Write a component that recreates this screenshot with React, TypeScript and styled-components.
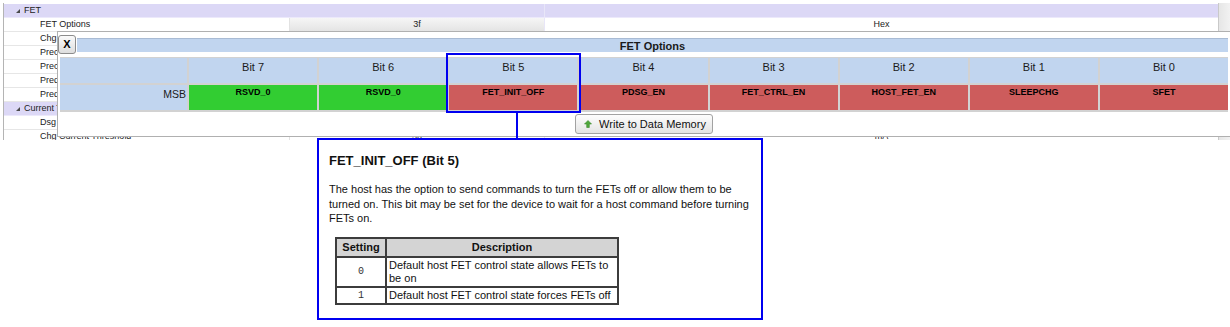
import React from "react"
import styled, { createGlobalStyle } from "styled-components"

const GlobalStyle = createGlobalStyle`
  html, body {
    margin: 0;
    padding: 0;
    background: #fff;
  }
  body {
    font-family: "Liberation Sans", Arial, sans-serif;
    color: #111;
  }
`

type TreeRowData = {
  label: string
  section?: boolean
  active?: boolean
  value?: string
  unit?: string
}

// rows 3..9 sit under the bit dialog; only the last one peeks out below it
const treeRows: TreeRowData[] = [
  { label: "FET", section: true },
  { label: "FET Options", value: "3f", unit: "Hex", active: true },
  { label: "Chg Current Threshold" },
  { label: "Precharge Start Voltage" },
  { label: "Precharge Recovery Voltage" },
  { label: "Predischarge Timeout" },
  { label: "Predischarge Stop Delta" },
  { label: "Current Thresholds", section: true },
  { label: "Dsg Current Threshold" },
  { label: "Chg Current Threshold", value: "50", unit: "mA" },
]

type BitData = { name: string; tone: "green" | "red" }

const bits: BitData[] = [
  { name: "RSVD_0", tone: "green" },
  { name: "RSVD_0", tone: "green" },
  { name: "FET_INIT_OFF", tone: "red" },
  { name: "PDSG_EN", tone: "red" },
  { name: "FET_CTRL_EN", tone: "red" },
  { name: "HOST_FET_EN", tone: "red" },
  { name: "SLEEPCHG", tone: "red" },
  { name: "SFET", tone: "red" },
]

const Expander = () => (
  <svg width="4" height="4" viewBox="0 0 4 4">
    <polygon points="4,0 4,4 0,4" fill="#4a4a4a" />
  </svg>
)

const UpArrow = () => (
  <svg width="8" height="8" viewBox="0 0 8 8">
    <polygon points="4,0.5 7.5,4 5.3,4 5.3,7.5 2.7,7.5 2.7,4 0.5,4" fill="#4fa83c" stroke="#3a8a2c" strokeWidth="0.6" />
  </svg>
)

const App: React.FC = () => {
  return (
    <Page>
      <GlobalStyle />
      <Tree>
        <TreeBody>
          {treeRows.map((row, i) => (
            <TreeRow key={i} $section={!!row.section}>
              <LabelCell $section={!!row.section}>
                {row.section && (
                  <ExpanderWrap>
                    <Expander />
                  </ExpanderWrap>
                )}
                {row.label}
              </LabelCell>
              <ValueCell $active={!!row.active}>{row.value}</ValueCell>
              <UnitCell>{row.unit}</UnitCell>
            </TreeRow>
          ))}
        </TreeBody>
        <ScrollBar />

        <Dialog>
          <TitleRow>
            <CloseButton>X</CloseButton>
            <TitleBar>FET Options</TitleBar>
          </TitleRow>
          <BitGrid>
            <HeadCell />
            {bits.map((_, i) => (
              <HeadCell key={i}>Bit {7 - i}</HeadCell>
            ))}
            <MsbCell>MSB</MsbCell>
            {bits.map((b, i) => (
              <BitCell key={i} $tone={b.tone}>
                {b.name}
              </BitCell>
            ))}
          </BitGrid>
          <Footer>
            <WriteButton>
              <UpArrow />
              Write to Data Memory
            </WriteButton>
          </Footer>
        </Dialog>
      </Tree>

      <Selection />
      <Connector />

      <Tooltip>
        <TipTitle>FET_INIT_OFF (Bit 5)</TipTitle>
        <TipText>
          The host has the option to send commands to turn the FETs off or allow them to be turned on. This bit may be
          set for the device to wait for a host command before turning FETs on.
        </TipText>
        <SettingTable>
          <colgroup>
            <col style={{ width: 50 }} />
            <col />
          </colgroup>
          <thead>
            <tr>
              <Th>Setting</Th>
              <Th>Description</Th>
            </tr>
          </thead>
          <tbody>
            <tr>
              <CodeTd>0</CodeTd>
              <Td>Default host FET control state allows FETs to be on</Td>
            </tr>
            <tr>
              <CodeTd>1</CodeTd>
              <Td>Default host FET control state forces FETs off</Td>
            </tr>
          </tbody>
        </SettingTable>
      </Tooltip>
    </Page>
  )
}

const Page = styled.div`
  position: relative;
  width: 1230px;
  height: 327px;
  overflow: hidden;
  background: #fff;
`

const Tree = styled.div`
  position: relative;
  display: flex;
  height: 137px;
  margin: 3px 0 0 3px;
  border-left: 1px solid #b4b4b4;
  overflow: hidden;
  font-size: 9px;
  color: #222;
`

const TreeBody = styled.div`
  flex: 1;
  padding-top: 1px;
`

const TreeRow = styled.div<{ $section: boolean }>`
  display: grid;
  grid-template-columns: 286px 255px 1fr;
  height: 13px;
  border-bottom: 1px solid ${({ $section }) => ($section ? "#ece9fb" : "#e6e6e6")};
  background: ${({ $section }) => ($section ? "#dcd8f6" : "#fff")};
  line-height: 13px;
`

const LabelCell = styled.div<{ $section: boolean }>`
  display: flex;
  align-items: center;
  gap: 4px;
  padding-left: ${({ $section }) => ($section ? "12px" : "36px")};
  white-space: nowrap;
  border-right: 1px solid ${({ $section }) => ($section ? "transparent" : "#e2e2e2")};
`

const ExpanderWrap = styled.span`
  display: inline-flex;
  margin-top: 1px;
`

const ValueCell = styled.div<{ $active: boolean }>`
  text-align: center;
  border-right: 1px solid #e8e6f8;
  background: ${({ $active }) => ($active ? "linear-gradient(#f6f6f6, #e4e4e4)" : "transparent")};
`

const UnitCell = styled.div`
  text-align: center;
`

const ScrollBar = styled.div`
  width: 11px;
  border-left: 1px solid #c9c9c9;
  background: linear-gradient(90deg, #e6e6e6, #f2f2f2);
`

const Dialog = styled.div`
  position: absolute;
  left: 53px;
  top: 28px;
  right: 0;
  background: #fff;
  border: 1px solid #b0b0b0;
  border-right: none;
  padding: 3px 2px 0 2px;
  font-size: 11px;
  color: #1a1a1a;
`

const TitleRow = styled.div`
  display: flex;
  align-items: center;
  height: 19px;
`

const CloseButton = styled.div`
  width: 16px;
  height: 17px;
  margin-left: -2px;
  border: 1px solid #8c8c8c;
  border-radius: 3px;
  background: linear-gradient(#fafafa, #dedede);
  font-weight: bold;
  font-size: 11px;
  line-height: 17px;
  text-align: center;
  color: #000;
`

const TitleBar = styled.div`
  flex: 1;
  height: 13px;
  margin-left: 1px;
  border-top: 1px solid #a9bbd4;
  background: #c1d5ef;
  font-weight: bold;
  line-height: 14px;
  text-align: center;
`

const BitGrid = styled.div`
  display: grid;
  grid-template-columns: 127px repeat(8, 1fr);
  grid-auto-rows: 25px;
  gap: 2px;
  margin-top: 3px;
  border-top: 1px solid #d2d2d2;
  border-bottom: 2px solid #d2d2d2;
  background: #d2d2d2;
`

const HeadCell = styled.div`
  background: #c1d5ef;
  text-align: center;
  padding-top: 3px;
  line-height: 13px;
`

const MsbCell = styled.div`
  background: #c1d5ef;
  text-align: right;
  padding: 3px 1px 0 0;
  font-size: 10.5px;
  line-height: 13px;
`

const BitCell = styled.div<{ $tone: "green" | "red" }>`
  background: ${({ $tone }) => ($tone === "green" ? "#32cd32" : "#cd5c5c")};
  text-align: center;
  padding-top: 2px;
  font-size: 9px;
  font-weight: bold;
  line-height: 11px;
  color: #000;
`

const Footer = styled.div`
  display: flex;
  justify-content: center;
  height: 24px;
  padding-top: 2px;
  box-sizing: border-box;
`

const WriteButton = styled.div`
  display: inline-flex;
  align-items: center;
  gap: 7px;
  height: 18px;
  padding: 0 6px 0 8px;
  border: 1px solid #a2a2a2;
  border-radius: 3px;
  background: linear-gradient(#fdfdfd, #e4e4e4);
  font-size: 11px;
  color: #111;
`

const Selection = styled.div`
  position: absolute;
  left: 446px;
  top: 53px;
  width: 135px;
  height: 60px;
  box-sizing: border-box;
  border: 2px solid #0000f0;
`

const Connector = styled.div`
  position: absolute;
  left: 516px;
  top: 113px;
  width: 2px;
  height: 26px;
  background: #0000f0;
`

const Tooltip = styled.div`
  position: absolute;
  left: 317px;
  top: 138px;
  width: 446px;
  height: 182px;
  box-sizing: border-box;
  padding: 13px 10px 0 10px;
  border: 2px solid #0000f0;
  background: #fff;
  color: #111;
`

const TipTitle = styled.div`
  font-size: 13px;
  font-weight: bold;
  line-height: 15px;
`

const TipText = styled.p`
  margin: 14px 0 0;
  font-size: 11px;
  line-height: 14.6px;
`

const SettingTable = styled.table`
  table-layout: fixed;
  margin: 11px 0 0 6px;
  width: 284px;
  border: 1px solid #3c3c3c;
  border-spacing: 0;
  font-size: 11px;
  line-height: 13px;
`

const Th = styled.th`
  padding: 2px 1px;
  border: 1px solid #3c3c3c;
  background: #d4d4d4;
  font-weight: bold;
  text-align: center;
`

const Td = styled.td`
  padding: 1px 1px 1px 2px;
  border: 1px solid #3c3c3c;
  text-align: left;
  vertical-align: middle;
`

const CodeTd = styled.td`
  padding: 1px 2px;
  border: 1px solid #3c3c3c;
  text-align: center;
  vertical-align: middle;
  font-family: "Liberation Mono", "Courier New", monospace;
  font-size: 10px;
  color: #333;
`

export default App
